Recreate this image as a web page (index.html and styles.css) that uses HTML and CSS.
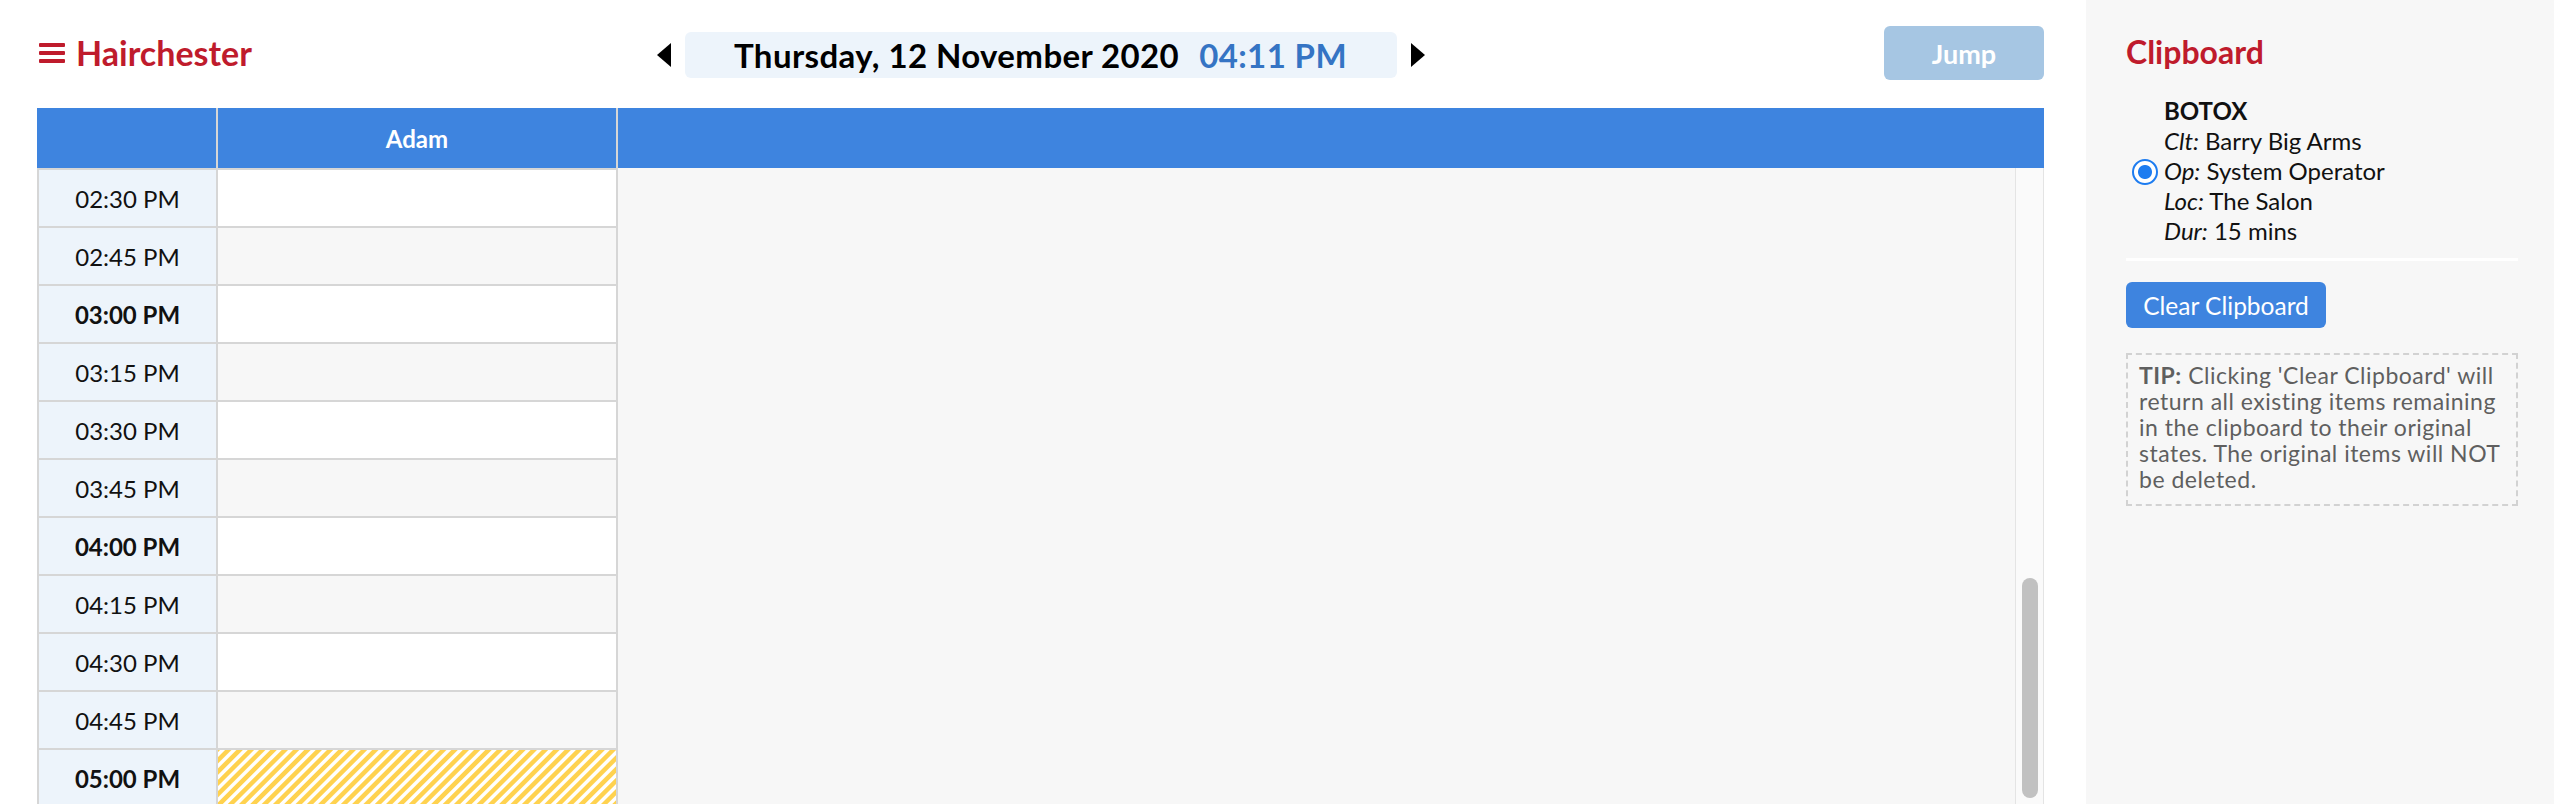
FILE: index.html
```html
<!DOCTYPE html>
<html lang="en">
<head>
<meta charset="utf-8">
<title>Hairchester – Schedule</title>
<link rel="stylesheet" href="styles.css">
</head>
<body>
<div class="app">
  <main class="main">
    <header class="topbar">
      <div class="brand">
        <svg class="burger" width="26" height="22" viewBox="0 0 26 22" aria-hidden="true">
          <rect x="0" y="0" width="26" height="4" rx="1"/>
          <rect x="0" y="8" width="26" height="4" rx="1"/>
          <rect x="0" y="16" width="26" height="4" rx="1"/>
        </svg>
        <span class="brand-name">Hairchester</span>
      </div>
      <div class="datenav">
        <svg class="arrow" width="14" height="24" viewBox="0 0 14 24" aria-hidden="true"><path d="M14 0 L0 12 L14 24 Z"/></svg>
        <div class="datebox">
          <span class="date">Thursday, 12 November 2020</span>
          <span class="clock">04:11 PM</span>
        </div>
        <svg class="arrow" width="14" height="24" viewBox="0 0 14 24" aria-hidden="true"><path d="M0 0 L14 12 L0 24 Z"/></svg>
      </div>
      <div class="actions">
        <button class="jump" type="button">Jump</button>
      </div>
    </header>

    <section class="schedule">
      <div class="sched-head">
        <div class="head-time"></div>
        <div class="head-staff">Adam</div>
        <div class="head-rest"></div>
      </div>
      <div class="sched-body">
        <div class="slots">
          <div class="slot"><div class="slot-time">02:30 PM</div><div class="slot-cell"></div></div>
          <div class="slot alt"><div class="slot-time">02:45 PM</div><div class="slot-cell"></div></div>
          <div class="slot hour"><div class="slot-time">03:00 PM</div><div class="slot-cell"></div></div>
          <div class="slot alt"><div class="slot-time">03:15 PM</div><div class="slot-cell"></div></div>
          <div class="slot"><div class="slot-time">03:30 PM</div><div class="slot-cell"></div></div>
          <div class="slot alt"><div class="slot-time">03:45 PM</div><div class="slot-cell"></div></div>
          <div class="slot hour"><div class="slot-time">04:00 PM</div><div class="slot-cell"></div></div>
          <div class="slot alt"><div class="slot-time">04:15 PM</div><div class="slot-cell"></div></div>
          <div class="slot"><div class="slot-time">04:30 PM</div><div class="slot-cell"></div></div>
          <div class="slot alt"><div class="slot-time">04:45 PM</div><div class="slot-cell"></div></div>
          <div class="slot hour closed"><div class="slot-time">05:00 PM</div><div class="slot-cell"></div></div>
        </div>
        <div class="filler"></div>
        <div class="scrollbar"><div class="thumb"></div></div>
      </div>
    </section>
  </main>

  <aside class="clipboard">
    <h2 class="clip-title">Clipboard</h2>
    <label class="clip-item">
      <span class="radio"></span>
      <span class="clip-info">
        <span class="clip-service">BOTOX</span>
        <span class="clip-line"><em>Clt:</em> Barry Big Arms</span>
        <span class="clip-line"><em>Op:</em> System Operator</span>
        <span class="clip-line"><em>Loc:</em> The Salon</span>
        <span class="clip-line"><em>Dur:</em> 15 mins</span>
      </span>
    </label>
    <div class="clip-sep"></div>
    <button class="clear-btn" type="button">Clear Clipboard</button>
    <p class="tip"><strong>TIP:</strong> Clicking 'Clear Clipboard' will return all existing items remaining in the clipboard to their original states. The original items will NOT be deleted.</p>
  </aside>
</div>
</body>
</html>
```

FILE: styles.css
```css
* { box-sizing: border-box; }

html, body {
  margin: 0;
  padding: 0;
  height: 100%;
}

body {
  font-family: Lato, "Open Sans", "Liberation Sans", sans-serif;
  color: #111;
  background: #fff;
  overflow: hidden;
}

.app {
  display: flex;
  height: 100vh;
}

/* ---------- main column ---------- */
.main {
  width: 2086px;
  flex: none;
  display: flex;
  flex-direction: column;
  padding: 26px 42px 0 37px;
  min-height: 0;
}

.topbar {
  display: grid;
  grid-template-columns: 1fr auto 1fr;
  align-items: center;
  height: 54px;
  margin-bottom: 28px;
}

.brand {
  display: flex;
  align-items: center;
  gap: 11px;
  color: #bf1b2c;
  padding-left: 2px;
}

.burger { fill: #bf1b2c; display: block; margin-top: 2px; }

.brand-name {
  font-size: 34px;
  font-weight: 700;
  line-height: 40px;
}

.datenav {
  display: flex;
  align-items: center;
  gap: 14px;
  padding-top: 4px;
}

.arrow { display: block; fill: #000; }

.datebox {
  width: 712px;
  height: 46px;
  border-radius: 6px;
  background: #edf4fb;
  display: flex;
  align-items: center;
  justify-content: center;
  gap: 20px;
  font-size: 33px;
  letter-spacing: 0.4px;
  font-weight: 700;
  line-height: 40px;
}

.date { color: #000; }
.clock { color: #3574c4; }

.actions {
  display: flex;
  justify-content: flex-end;
}

.jump {
  width: 160px;
  height: 54px;
  border: 0;
  border-radius: 6px;
  background: #a6c6e3;
  color: #fff;
  font-family: inherit;
  font-size: 27px;
  font-weight: 700;
  padding: 0;
}

/* ---------- schedule ---------- */
.schedule {
  flex: 1;
  min-height: 0;
  display: flex;
  flex-direction: column;
}

.sched-head {
  display: flex;
  height: 60px;
  background: #3e84df;
  color: #fff;
}

.head-time {
  width: 181px;
  border-right: 2px solid #d6d6d6;
}

.head-staff {
  width: 400px;
  border-right: 2px solid #d6d6d6;
  display: flex;
  align-items: center;
  justify-content: center;
  font-size: 24px;
  font-weight: 700;
}

.head-rest { flex: 1; }

.sched-body {
  flex: 1;
  min-height: 0;
  display: flex;
  overflow: hidden;
}

.slots {
  width: 581px;
  flex: none;
  border-left: 2px solid #d6d6d6;
  display: flex;
  flex-direction: column;
}

.slot {
  display: flex;
  flex: none;
  height: 58px;
  border-top: 2px solid #d6d6d6;
}

.slot-time {
  width: 179px;
  border-right: 2px solid #d6d6d6;
  background: #edf4fb;
  display: flex;
  align-items: center;
  justify-content: center;
  font-size: 24px;
  color: #111;
}

.slot.hour .slot-time { font-weight: 700; }

.slot-cell {
  width: 400px;
  border-right: 2px solid #d6d6d6;
  background: #fff;
}

.slot.alt .slot-cell { background: #f7f7f7; }

.slot.closed .slot-cell {
  background: repeating-linear-gradient(
    -45deg,
    #ffd24f 0,
    #ffd24f 3.5px,
    #ffffff 4.5px,
    #ffffff 7px,
    #ffd24f 8px
  );
}

.filler {
  flex: 1;
  background: #f7f7f7;
}

.scrollbar {
  width: 29px;
  flex: none;
  background: #fafafa;
  border-left: 1px solid #e4e4e4;
  border-right: 1px solid #e4e4e4;
  padding-top: 410px;
}

.thumb {
  width: 16px;
  height: 220px;
  margin: 0 auto;
  border-radius: 8px;
  background: #c1c1c1;
}

/* ---------- clipboard panel ---------- */
.clipboard {
  flex: 1;
  background: #f7f7f7;
  padding: 32px 36px 0 40px;
  display: flex;
  flex-direction: column;
  align-items: flex-start;
}

.clip-title {
  margin: 0 0 24px;
  font-size: 32px;
  line-height: 40px;
  font-weight: 700;
  color: #bf1b2c;
}

.clip-item {
  display: flex;
  align-items: center;
  gap: 6px;
  font-size: 24px;
  line-height: 30px;
  color: #111;
}

.radio {
  width: 26px;
  height: 26px;
  flex: none;
  margin-left: 6px;
  border-radius: 50%;
  border: 2.5px solid #1d7cf0;
  background: radial-gradient(circle, #1d7cf0 0, #1d7cf0 6.5px, #ffffff 7.5px);
  margin-top: 2px;
}

.clip-info {
  display: flex;
  flex-direction: column;
}

.clip-service { font-weight: 700; }

.clip-line em { font-style: italic; }

.clip-sep {
  align-self: stretch;
  height: 3px;
  background: #fff;
  margin: 12px 0 21px;
}

.clear-btn {
  height: 46px;
  width: 200px;
  padding: 0;
  border: 0;
  border-radius: 6px;
  background: #3e84df;
  color: #fff;
  font-family: inherit;
  font-size: 24.5px;
  font-weight: 400;
}

.tip {
  align-self: stretch;
  margin: 25px 0 0;
  border: 2px dashed #d2d2d2;
  padding: 7px 12px 12px 11px;
  font-size: 23px;
  letter-spacing: 0.5px;
  line-height: 26px;
  color: #5f5f5f;
}

.tip strong { font-weight: 700; }
```
